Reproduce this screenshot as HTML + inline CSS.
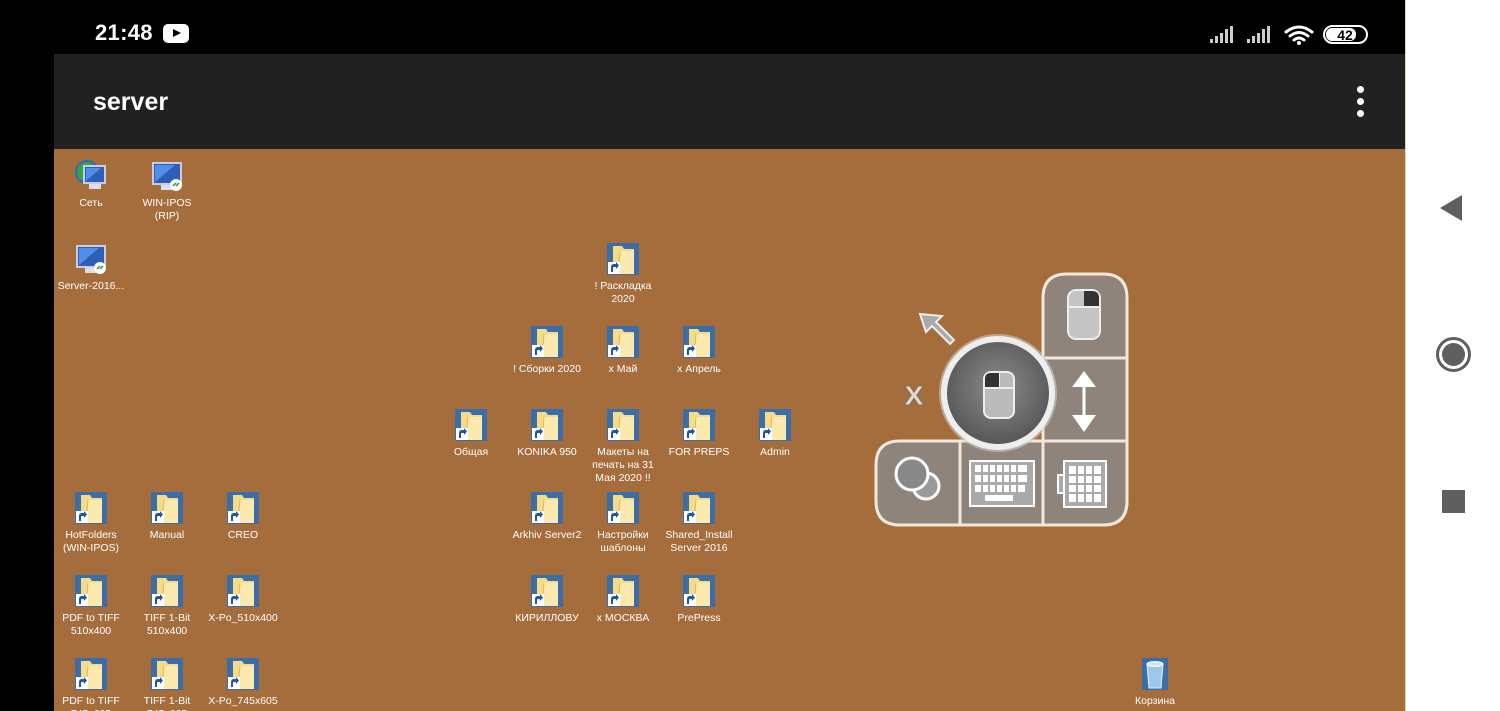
<!DOCTYPE html>
<html><head><meta charset="utf-8"><style>
*{margin:0;padding:0;box-sizing:border-box}
body{width:1500px;height:711px;overflow:hidden;background:#000;position:relative;font-family:"Liberation Sans",sans-serif}
#status{position:absolute;left:0;top:0;width:1405px;height:54px;background:#000;color:#fff}
#appbar{position:absolute;left:54px;top:54px;width:1351px;height:95px;background:#212121}
#desk{position:absolute;left:54px;top:149px;width:1351px;height:562px;background:#a56d3c;overflow:hidden}
#nav{position:absolute;left:1405px;top:0;width:95px;height:711px;background:#fff;border-left:1px solid #e7cfa8}
.it{position:absolute;width:80px;text-align:center;color:#fff;font-size:10.5px;line-height:13px;font-family:"Liberation Sans","DejaVu Sans",sans-serif}
.it svg{display:block;margin:0 auto 5px}
</style></head><body>
<div id="status">
 <div style="position:absolute;left:95px;top:20px;font-size:22px;font-weight:bold;letter-spacing:0.3px">21:48</div>
 <div style="position:absolute;left:163px;top:24px;width:26px;height:19px;background:#fff;border-radius:5px"><div style="position:absolute;left:10px;top:5px;border-left:8px solid #000;border-top:4.5px solid transparent;border-bottom:4.5px solid transparent"></div></div>
 <svg style="position:absolute;left:1208px;top:24px" width="160" height="22" viewBox="0 0 160 22">
  <g fill="#ccc"><rect x="2" y="15" width="3" height="4"/><rect x="7" y="12" width="3" height="7"/><rect x="12" y="9" width="3" height="10"/><rect x="17" y="5" width="3" height="14"/><rect x="22" y="2" width="3" height="17"/>
  <rect x="39" y="15" width="3" height="4"/><rect x="44" y="12" width="3" height="7"/><rect x="49" y="9" width="3" height="10"/><rect x="54" y="5" width="3" height="14"/><rect x="59" y="2" width="3" height="17"/></g>
  <g fill="none" stroke="#fff" stroke-width="3" stroke-linecap="round"><path d="M78 8 Q91 -2 104 8"/><path d="M82 12 Q91 5 100 12"/><path d="M86 16 Q91 12 96 16"/></g><circle cx="91" cy="19" r="2" fill="#fff"/>
  <rect x="116" y="2" width="43" height="17" rx="8.5" fill="none" stroke="#fff" stroke-width="2"/>
  <rect x="118" y="4" width="30" height="13" rx="6" fill="#fff"/>
  <text x="137" y="16" text-anchor="middle" font-size="14" font-weight="bold" fill="#000" font-family="Liberation Sans">42</text>
 </svg>
</div>
<div id="appbar">
 <div style="position:absolute;left:39px;top:34px;color:#fff;font-size:25px;font-weight:bold">server</div>
 <div style="position:absolute;left:1303px;top:32px"><div style="width:7px;height:7px;border-radius:50%;background:#fff;margin-bottom:5px"></div><div style="width:7px;height:7px;border-radius:50%;background:#fff;margin-bottom:5px"></div><div style="width:7px;height:7px;border-radius:50%;background:#fff"></div></div>
</div>
<div id="desk">
<svg width="0" height="0" style="position:absolute"><defs>
 <g id="fold"><rect x="0" y="0" width="32" height="32" fill="#3b6ea8"/><path d="M6 3h9l2 3h10v25H6z" fill="#f5dc8a"/><path d="M13 8h14v23H11z" fill="#fbe9ae"/><path d="M13 8l-2 23" stroke="#d8b85a" fill="none"/><rect x="1" y="19" width="12" height="12" fill="#fff"/><path d="M4 29v-5q0-3 3-3h2v-2l3 3.5-3 3.5v-2h-2q-1 0-1 1v4z" fill="#1e56a8"/></g>
 <g id="comp"><rect x="2" y="3" width="28" height="21" fill="#2d5fb8" stroke="#ccd" stroke-width="2"/><path d="M4 5h20l-20 17z" fill="#4f8fe8"/><rect x="10" y="25" width="12" height="5" fill="#dde"/><circle cx="25" cy="25" r="6" fill="#fff"/><path d="M22 26l3-3m0 3l3-3" stroke="#2a9a3a" stroke-width="1.5"/></g>
 <g id="net"><circle cx="12" cy="12" r="11" fill="#3aa04a"/><circle cx="12" cy="12" r="11" fill="none" stroke="#2a6cc0" stroke-width="2"/><rect x="9" y="6" width="21" height="17" fill="#2d5fb8" stroke="#ccd" stroke-width="2"/><path d="M11 8h15l-15 13z" fill="#4f8fe8"/><rect x="14" y="24" width="12" height="5" fill="#dde"/></g>
</defs></svg>
<div class="it" style="left:-3px;top:11px"><svg width="32" height="32"><use href="#net"/></svg>Сеть</div>
<div class="it" style="left:73px;top:11px"><svg width="32" height="32"><use href="#comp"/></svg>WIN-IPOS<br>(RIP)</div>
<div class="it" style="left:-3px;top:94px"><svg width="32" height="32"><use href="#comp"/></svg>Server-2016...</div>
<div class="it" style="left:529px;top:94px"><svg width="32" height="32"><use href="#fold"/></svg>! Раскладка<br>2020</div>
<div class="it" style="left:453px;top:177px"><svg width="32" height="32"><use href="#fold"/></svg>! Сборки 2020</div>
<div class="it" style="left:529px;top:177px"><svg width="32" height="32"><use href="#fold"/></svg>x Май</div>
<div class="it" style="left:605px;top:177px"><svg width="32" height="32"><use href="#fold"/></svg>x Апрель</div>
<div class="it" style="left:377px;top:260px"><svg width="32" height="32"><use href="#fold"/></svg>Общая</div>
<div class="it" style="left:453px;top:260px"><svg width="32" height="32"><use href="#fold"/></svg>KONIKA 950</div>
<div class="it" style="left:529px;top:260px"><svg width="32" height="32"><use href="#fold"/></svg>Макеты на<br>печать на 31<br>Мая 2020 !!</div>
<div class="it" style="left:605px;top:260px"><svg width="32" height="32"><use href="#fold"/></svg>FOR PREPS</div>
<div class="it" style="left:681px;top:260px"><svg width="32" height="32"><use href="#fold"/></svg>Admin</div>
<div class="it" style="left:-3px;top:343px"><svg width="32" height="32"><use href="#fold"/></svg>HotFolders<br>(WIN-IPOS)</div>
<div class="it" style="left:73px;top:343px"><svg width="32" height="32"><use href="#fold"/></svg>Manual</div>
<div class="it" style="left:149px;top:343px"><svg width="32" height="32"><use href="#fold"/></svg>CREO</div>
<div class="it" style="left:453px;top:343px"><svg width="32" height="32"><use href="#fold"/></svg>Arkhiv Server2</div>
<div class="it" style="left:529px;top:343px"><svg width="32" height="32"><use href="#fold"/></svg>Настройки<br>шаблоны</div>
<div class="it" style="left:605px;top:343px"><svg width="32" height="32"><use href="#fold"/></svg>Shared_Install<br>Server 2016</div>
<div class="it" style="left:-3px;top:426px"><svg width="32" height="32"><use href="#fold"/></svg>PDF to TIFF<br>510x400</div>
<div class="it" style="left:73px;top:426px"><svg width="32" height="32"><use href="#fold"/></svg>TIFF 1-Bit<br>510x400</div>
<div class="it" style="left:149px;top:426px"><svg width="32" height="32"><use href="#fold"/></svg>X-Po_510x400</div>
<div class="it" style="left:453px;top:426px"><svg width="32" height="32"><use href="#fold"/></svg>КИРИЛЛОВУ</div>
<div class="it" style="left:529px;top:426px"><svg width="32" height="32"><use href="#fold"/></svg>x МОСКВА</div>
<div class="it" style="left:605px;top:426px"><svg width="32" height="32"><use href="#fold"/></svg>PrePress</div>
<div class="it" style="left:-3px;top:509px"><svg width="32" height="32"><use href="#fold"/></svg>PDF to TIFF<br>745x605</div>
<div class="it" style="left:73px;top:509px"><svg width="32" height="32"><use href="#fold"/></svg>TIFF 1-Bit<br>745x605</div>
<div class="it" style="left:149px;top:509px"><svg width="32" height="32"><use href="#fold"/></svg>X-Po_745x605</div>
<div class="it" style="left:1061px;top:509px"><svg width="32" height="32"><rect x="3" y="0" width="26" height="32" fill="#3b6ea8"/><path d="M8 6h16l-2 24h-12z" fill="#9cc8ec" stroke="#eef" /><ellipse cx="16" cy="6" rx="8" ry="2.5" fill="#cfe6f8" stroke="#fff"/></svg>Корзина</div>

<svg style="position:absolute;left:818px;top:120px" width="262" height="262" viewBox="818 120 262 262">
 <defs><radialGradient id="cg" cx="50%" cy="45%" r="55%"><stop offset="0" stop-color="#8c8c8c"/><stop offset="1" stop-color="#555"/></radialGradient></defs>
 <path d="M1013 125h36q24 0 24 24v203q0 24-24 24H989V149q0-24 24-24z" fill="#8e847c" stroke="#f3e8d8" stroke-width="3"/>
 <path d="M846 292h227v60q0 24-24 24H846q-24 0-24-24v-36q0-24 24-24z" fill="#8e847c" stroke="#f3e8d8" stroke-width="3"/>
 <g stroke="#f3e8d8" stroke-width="3"><line x1="989" y1="209" x2="1073" y2="209"/><line x1="989" y1="292" x2="1073" y2="292"/><line x1="906" y1="292" x2="906" y2="376"/><line x1="989" y1="292" x2="989" y2="376"/></g>
 <rect x="1014" y="141" width="32" height="49" rx="8" fill="#c4c4c4" stroke="#eee" stroke-width="2"/><line x1="1014" y1="158" x2="1046" y2="158" stroke="#eee" stroke-width="2"/><path d="M1030 142h8q7 0 7 7v8h-15z" fill="#333"/>
 <line x1="1030" y1="225" x2="1030" y2="278" stroke="#fff" stroke-width="3"/><path d="M1018 238l12-16 12 16z M1018 266l12 17 12-17z" fill="#fff"/>
 <circle cx="944" cy="244" r="59" fill="#ccc" opacity=".6"/>
 <circle cx="944" cy="244" r="54" fill="url(#cg)" stroke="#eee" stroke-width="6"/>
 <rect x="930" y="223" width="30" height="46" rx="7" fill="#bbb" stroke="#eee" stroke-width="2"/><line x1="930" y1="239" x2="960" y2="239" stroke="#eee" stroke-width="2"/><line x1="945" y1="224" x2="945" y2="239" stroke="#eee" stroke-width="2"/><path d="M931 238v-8q0-6 6-6h8v14z" fill="#333"/>
 <path d="M866 165l22 2-6 6 18 18-4 4-18-18-6 6z" fill="#aaa" stroke="#eee" stroke-width="2"/>
 <text x="860" y="256" font-size="36" font-weight="bold" fill="#e2d8cd" stroke="#7a6e64" stroke-width="1" text-anchor="middle" font-family="Liberation Sans">x</text>
 <circle cx="872" cy="337" r="13" fill="#999" stroke="#fff" stroke-width="3"/><circle cx="858" cy="325" r="16" fill="#888" stroke="#fff" stroke-width="3"/>
 <rect x="916" y="312" width="64" height="45" fill="#aaa" stroke="#fff" stroke-width="2"/>
 <g fill="#fff"><rect x="921" y="316" width="52" height="7"/><rect x="921" y="326" width="52" height="7"/><rect x="921" y="336" width="50" height="7"/><rect x="931" y="346" width="28" height="6"/></g>
 <g stroke="#aaa" stroke-width="2"><line x1="928" y1="316" x2="928" y2="343"/><line x1="935" y1="316" x2="935" y2="343"/><line x1="942" y1="316" x2="942" y2="343"/><line x1="949" y1="316" x2="949" y2="343"/><line x1="956" y1="316" x2="956" y2="343"/><line x1="963" y1="316" x2="963" y2="343"/></g>
 <rect x="1010" y="312" width="42" height="46" fill="#aaa" stroke="#fff" stroke-width="2"/><rect x="1004" y="326" width="6" height="18" fill="#aaa" stroke="#fff" stroke-width="2"/>
 <g fill="#fff"><rect x="1015" y="317" width="32" height="36"/></g>
 <g stroke="#aaa" stroke-width="2"><line x1="1023" y1="317" x2="1023" y2="353"/><line x1="1031" y1="317" x2="1031" y2="353"/><line x1="1039" y1="317" x2="1039" y2="353"/><line x1="1015" y1="326" x2="1047" y2="326"/><line x1="1015" y1="335" x2="1047" y2="335"/><line x1="1015" y1="344" x2="1047" y2="344"/></g>
</svg>
</div>
<div id="nav">
 <div style="position:absolute;left:34px;top:195px;border-right:22px solid #5f5f5f;border-top:13px solid transparent;border-bottom:13px solid transparent"></div>
 <div style="position:absolute;left:30px;top:337px;width:35px;height:35px;border-radius:50%;border:3px solid #5f5f5f;background:#fff"><div style="position:absolute;left:3px;top:3px;width:23px;height:23px;border-radius:50%;background:#5f5f5f"></div></div>
 <div style="position:absolute;left:36px;top:490px;width:23px;height:23px;background:#5f5f5f"></div>
</div>
</body></html>
